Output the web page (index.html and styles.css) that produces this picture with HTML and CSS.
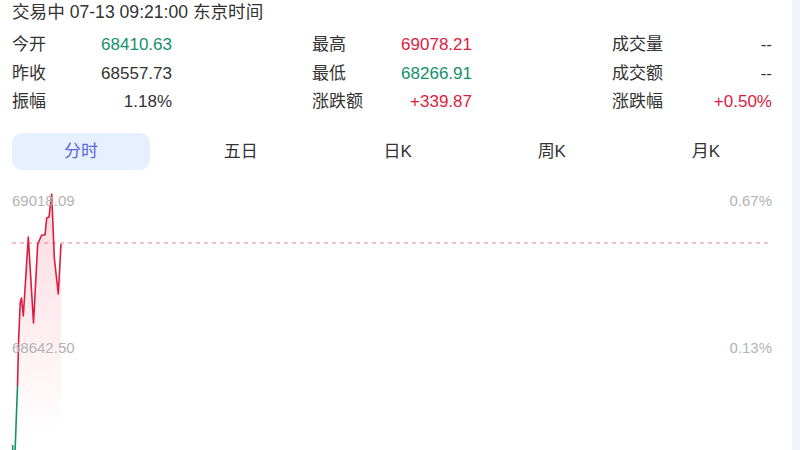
FILE: index.html
```html
<!DOCTYPE html>
<html lang="zh-CN">
<head>
  <meta charset="UTF-8">
  <title>行情</title>
  <link rel="stylesheet" href="styles.css">
</head>
<body>
  <div class="page">

    <!-- 状态 -->
    <div class="status">交易中 07-13 09:21:00 东京时间</div>

    <!-- 行情数据 -->
    <div class="stats">
      <div class="stat"><span class="label">今开</span><span class="value down">68410.63</span></div>
      <div class="stat"><span class="label">最高</span><span class="value up">69078.21</span></div>
      <div class="stat"><span class="label">成交量</span><span class="value">--</span></div>
      <div class="stat"><span class="label">昨收</span><span class="value">68557.73</span></div>
      <div class="stat"><span class="label">最低</span><span class="value down">68266.91</span></div>
      <div class="stat"><span class="label">成交额</span><span class="value">--</span></div>
      <div class="stat"><span class="label">振幅</span><span class="value">1.18%</span></div>
      <div class="stat"><span class="label">涨跌额</span><span class="value up">+339.87</span></div>
      <div class="stat"><span class="label">涨跌幅</span><span class="value up">+0.50%</span></div>
    </div>

    <!-- 周期切换 -->
    <div class="tabs">
      <div class="tab active"><span>分时</span></div>
      <div class="tab"><span>五日</span></div>
      <div class="tab"><span>日K</span></div>
      <div class="tab"><span>周K</span></div>
      <div class="tab"><span>月K</span></div>
    </div>

    <!-- 分时图 -->
    <div class="chart">
      <svg class="chart-svg" width="792" height="270" viewBox="0 0 792 270">
        <defs>
          <linearGradient id="area" x1="0" y1="0" x2="0" y2="1">
            <stop offset="0" stop-color="#e8163c" stop-opacity="0.16"/>
            <stop offset="0.85" stop-color="#e8163c" stop-opacity="0.03"/>
            <stop offset="1" stop-color="#e8163c" stop-opacity="0"/>
          </linearGradient>
        </defs>
        <path d="M17.5,205 L18.6,160 L20.2,122 L21.5,117 L23.3,135 L28.3,56 L33.5,142 L37.7,63 L41.7,54 L45,54 L46.7,37 L49,36 L51.7,13 L54.3,77 L58.3,113 L61,63 L61,250 L17.5,250 Z" fill="url(#area)"/>
        <line x1="12" y1="62" x2="772" y2="62" class="base-line"/>
        <path d="M12.7,264 L12.7,272 M15,272 L17.5,205" class="line-down"/>
        <path d="M17.5,205 L18.6,160 L20.2,122 L21.5,117 L23.3,135 L28.3,56 L33.5,142 L37.7,63 L41.7,54 L45,54 L46.7,37 L49,36 L51.7,13 L54.3,77 L58.3,113 L61,63" class="line-up"/>
      </svg>
      <span class="axis axis-left axis-top">69018.09</span>
      <span class="axis axis-right axis-top">0.67%</span>
      <span class="axis axis-left axis-mid">68642.50</span>
      <span class="axis axis-right axis-mid">0.13%</span>
    </div>

  </div>
</body>
</html>
```

FILE: styles.css
```css
html, body {
  margin: 0;
  padding: 0;
}
body {
  font-family: "Liberation Sans", "Noto Sans CJK SC", sans-serif;
  font-size: 17px;
  color: #333;
  background: #f1f3fa;
}
.page {
  width: 792px;
  height: 450px;
  background: #fff;
  overflow: hidden;
}
.status {
  padding-left: 12px;
  line-height: 24px;
  font-size: 17.6px;
}
.stats {
  display: grid;
  grid-template-columns: 160px 160px 160px;
  justify-content: space-between;
  padding: 0 20px 0 12px;
  margin-top: 7px;
}
.stat {
  display: flex;
  justify-content: space-between;
  line-height: 28.5px;
}
.value {
  color: #333;
}
.up {
  color: #dd1c3e;
}
.down {
  color: #14906c;
}
.tabs {
  display: flex;
  width: 782px;
  margin: 16px 0 0 1px;
}
.tab {
  flex: 1 1 auto;
  padding: 0 11px;
  text-align: center;
}
.tab span {
  display: block;
  height: 37px;
  line-height: 37px;
  border-radius: 10px;
}
.tab.active span {
  background: #e6f0ff;
  color: #5a68d9;
}
.chart {
  position: relative;
  margin-top: 11px;
  height: 270px;
}
.chart-svg {
  display: block;
}
.base-line {
  stroke: #f07c8f;
  stroke-width: 1;
  stroke-dasharray: 4 4;
}
.line-up {
  fill: none;
  stroke: #dd1c3e;
  stroke-width: 1.6;
  stroke-linejoin: round;
}
.line-down {
  fill: none;
  stroke: #14906c;
  stroke-width: 1.6;
}
.axis {
  position: absolute;
  font-size: 15px;
  line-height: 18px;
  color: #b3b3b3;
}
.axis-left {
  left: 12px;
}
.axis-right {
  right: 20px;
}
.axis-top {
  top: 11px;
}
.axis-mid {
  top: 158px;
}
```
